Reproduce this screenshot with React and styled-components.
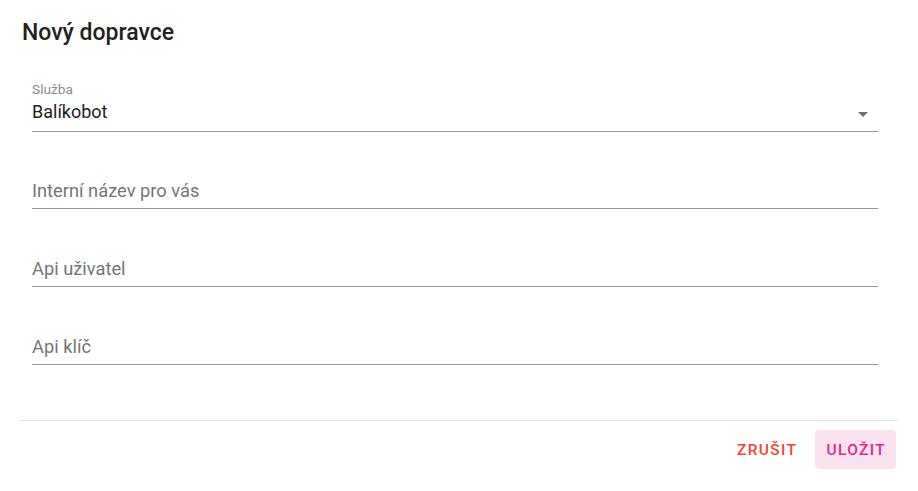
import React from 'react'
import styled, { createGlobalStyle } from 'styled-components'

const Global = createGlobalStyle`
  html, body {
    margin: 0;
    padding: 0;
    background: #fff;
  }
  body {
    font-family: Roboto, "Liberation Sans", sans-serif;
    color: rgba(0, 0, 0, 0.87);
  }
`

const Dialog = styled.div`
  width: 918px;
  height: 491px;
  box-sizing: border-box;
  padding: 0 20px;
  display: flex;
  flex-direction: column;
`

const Title = styled.h2`
  margin: 0;
  padding: 17px 0 0 2px;
  font-size: 23px;
  line-height: 32px;
  font-weight: 500;
  color: #212121;
`

const Form = styled.div`
  display: flex;
  flex-direction: column;
  padding: 33px 20px 0 12px;
`

const SelectField = styled.div`
  display: flex;
  flex-direction: column;
  gap: 5px;
  border-bottom: 1px solid #949494;
  padding-bottom: 9px;
  margin-bottom: 46px;
`

const Label = styled.label`
  font-size: 13.7px;
  line-height: 15px;
  color: #8a8a8a;
`

const SelectRow = styled.div`
  display: flex;
  align-items: flex-start;
  height: 20px;
`

const SelectValue = styled.div`
  flex: 1;
  font-size: 18px;
  line-height: 20px;
  color: #212121;
`

const Arrow = styled.svg`
  width: 24px;
  height: 24px;
  margin: 0 3px 0 0;
  fill: #6f6f6f;
`

const Inputs = styled.div`
  display: flex;
  flex-direction: column;
  gap: 47px;
`

const Input = styled.input`
  display: block;
  width: 100%;
  box-sizing: border-box;
  border: none;
  border-bottom: 1px solid #949494;
  outline: none;
  padding: 0 0 6px;
  height: 31px;
  font-family: inherit;
  font-size: 18.3px;
  line-height: 24px;
  color: #212121;
  background: transparent;

  &::placeholder {
    color: #757575;
    opacity: 1;
  }
`

const Footer = styled.div`
  margin-top: 55px;
  border-top: 1px solid #e3e3e3;
  padding: 9px 2px 0 0;
  display: flex;
  justify-content: flex-end;
  gap: 8px;
`

const Button = styled.button`
  height: 39px;
  padding: 0 10px 0 11px;
  border: none;
  border-radius: 4px;
  font-family: inherit;
  font-size: 15.5px;
  font-weight: 500;
  letter-spacing: 1.35px;
  text-transform: uppercase;
  cursor: pointer;
  color: ${p => (p.$tone === 'save' ? '#dd2a88' : '#f44336')};
  background: ${p => (p.$tone === 'save' ? '#fae1ef' : 'transparent')};
`

export default function App() {
  return (
    <>
      <Global />
      <Dialog>
        <Title>Nový dopravce</Title>
        <Form>
          <SelectField>
            <Label>Služba</Label>
            <SelectRow>
              <SelectValue>Balíkobot</SelectValue>
              <Arrow viewBox="0 0 24 24">
                <path d="M7 10l5 5 5-5z" />
              </Arrow>
            </SelectRow>
          </SelectField>
          <Inputs>
            <Input placeholder="Interní název pro vás" />
            <Input placeholder="Api uživatel" />
            <Input placeholder="Api klíč" />
          </Inputs>
        </Form>
        <Footer>
          <Button>Zrušit</Button>
          <Button $tone="save">Uložit</Button>
        </Footer>
      </Dialog>
    </>
  )
}
